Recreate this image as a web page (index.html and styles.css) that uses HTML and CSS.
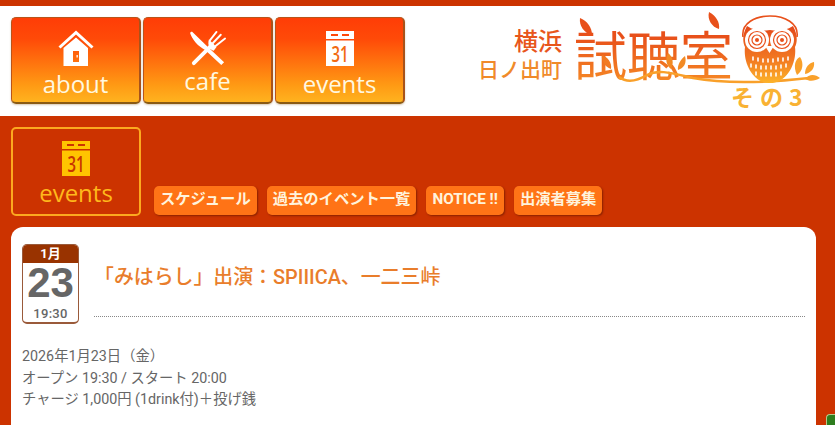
FILE: index.html
```html
<!DOCTYPE html>
<html lang="ja">
<head>
    <meta charset="UTF-8">
    <meta name="viewport" content="width=device-width, initial-scale=1.0">
    <title>横浜日ノ出町 試聴室その3 - events</title>
    <link rel="stylesheet" href="styles.css">
</head>
<body>
    <header class="header">
        <nav class="nav">
            <a class="nav-btn" href="#">
                <svg class="nav-icon" viewBox="0 0 36 36" width="36" height="36">
                    <path d="M18 0.5 L0.5 16.5 L2.5 18.5 L18 4.5 L33.5 18.5 L35.5 16.5 Z" fill="#fff"/>
                    <path fill-rule="evenodd" d="M18 7.5 L30 18 V36 H5.5 V18 Z M15 21 V32 H21 V21 Z" fill="#fff"/>
                    <rect x="18.5" y="25" width="1.3" height="2.5" fill="#fff"/>
                </svg>
                <span class="nav-label">about</span>
            </a>
            <a class="nav-btn" href="#">
                <svg class="nav-icon" viewBox="0 0 40 38" width="40" height="38">
                    <path d="M1 3 L3 1.5 L21 19 L37 34 L34 37 L17 21 C10 18 3 10 1 3 Z" fill="#fff"/>
                    <path d="M5 35 L24 16" stroke="#fff" stroke-width="4" stroke-linecap="round"/>
                    <path d="M29 2 L22 11 M33.5 5 L25 14 M38 9 L28 17" stroke="#fff" stroke-width="2" stroke-linecap="round"/>
                    <path d="M21 10 L29 18 L26 22 C22 21 19 16 21 10 Z" fill="#fff"/>
                </svg>
                <span class="nav-label nav-label-up">cafe</span>
            </a>
            <a class="nav-btn" href="#">
                <svg class="nav-icon" viewBox="0 0 30 36" width="30" height="36">
                    <path fill-rule="evenodd" d="M1 1 H29 V9 H1 Z M6 4 V6 H13 V4 Z M17 4 V6 H24 V4 Z" fill="#fff"/>
                    <path d="M1 10.5 H29 V36 H1 Z" fill="#fff"/>
                    <text x="15" y="32" class="cal-num" textLength="17" lengthAdjust="spacingAndGlyphs" fill="#f26a12">31</text>
                </svg>
                <span class="nav-label">events</span>
            </a>
        </nav>
        <a class="logo" href="#">
            <span class="logo-place">
                <span class="logo-city">横浜</span>
                <span class="logo-town">日ノ出町</span>
            </span>
            <span class="logo-name">試聴室</span>
            <span class="logo-sub">その3</span>
            <svg class="logo-art" viewBox="0 0 260 100" width="260" height="100">
                <defs>
                    <linearGradient id="owlFill" x1="0" y1="0" x2="0" y2="1">
                        <stop offset="0" stop-color="#e4481a"/>
                        <stop offset="0.6" stop-color="#f27a22"/>
                        <stop offset="1" stop-color="#fdb42a"/>
                    </linearGradient>
                </defs>
                <!-- branch -->
                <path d="M44 64 C52 70 62 68 72 62 C84 56 96 60 118 65 C150 71 190 70 234 65" fill="none" stroke="#f9a02a" stroke-width="2.5"/>
                <!-- leaves -->
                <path d="M5 5 C12 8 17 14 17 22 C9 20 4 13 5 5 Z" fill="#e8501a"/>
                <path d="M134 -1 C141 3 145 9 144 16 C137 14 132 7 134 -1 Z" fill="#e8501a"/>
                <path d="M27 42 C33 44 37 50 36 56 C30 54 26 48 27 42 Z" fill="#f27a22"/>
                <path d="M93 40 C98 44 99 50 96 56 C91 52 90 46 93 40 Z" fill="#f28a24"/>
                <path d="M110 43 C106 46 102 52 103 57 C109 55 112 50 110 43 Z" fill="#f28a24"/>
                <path d="M222 62 C218 54 220 46 225 44 C229 50 228 58 222 62 Z" fill="#f9a02a"/>
                <path d="M230 61 C230 54 234 50 239 49 C240 55 236 60 230 61 Z" fill="#f9a02a"/>
                <path d="M230 66 C234 61 240 61 245 65 C240 68 235 69 230 66 Z" fill="#f9a02a"/>
                <!-- headphones -->
                <path d="M168 24 C164 -4 226 -4 222 24" fill="none" stroke="#e8501a" stroke-width="1.6"/>
                <!-- owl -->
                <path d="M172 13 C180 18 186 18 195 17 C204 18 210 18 218 13 C222 20 223 28 220 34 C222 50 212 70 195 70 C178 70 168 50 170 34 C167 28 168 20 172 13 Z" fill="url(#owlFill)"/>
                <circle cx="182" cy="27" r="12" fill="#fff"/>
                <circle cx="207" cy="27" r="12" fill="#fff"/>
                <circle cx="182" cy="27" r="8.5" fill="none" stroke="#e8501a" stroke-width="1.2"/>
                <circle cx="207" cy="27" r="8.5" fill="none" stroke="#e8501a" stroke-width="1.2"/>
                <circle cx="182" cy="27" r="5" fill="none" stroke="#e8501a" stroke-width="1.2"/>
                <circle cx="207" cy="27" r="5" fill="none" stroke="#e8501a" stroke-width="1.2"/>
                <circle cx="182" cy="27" r="2" fill="#e8501a"/>
                <circle cx="207" cy="27" r="2" fill="#e8501a"/>
                <path d="M190 33 H199 L194.5 40 Z" fill="#fff"/>
                <path d="M178 44 v3 M183 45 v3 M188 46 v3 M193 46 v3 M198 46 v3 M203 45 v3 M208 45 v3 M213 44 v3 M176 51 v3 M181 52 v3 M186 53 v3 M191 53 v3 M196 53 v3 M201 53 v3 M206 52 v3 M211 51 v3 M181 59 v3 M186 60 v3 M191 60 v3 M196 60 v3 M201 60 v3 M206 59 v3" stroke="#fff" stroke-width="1.6" stroke-linecap="round"/>
            </svg>
        </a>
    </header>

    <main class="main">
        <div class="section-head">
            <div class="section-badge">
                <svg class="section-icon" viewBox="0 0 30 36" width="30" height="36">
                    <path fill-rule="evenodd" d="M1 1 H29 V9 H1 Z M6 4 V6 H13 V4 Z M17 4 V6 H24 V4 Z" fill="#ffc400"/>
                    <path d="M1 10.5 H29 V36 H1 Z" fill="#ffc400"/>
                    <text x="15" y="32" class="cal-num" textLength="17" lengthAdjust="spacingAndGlyphs" fill="#c93400">31</text>
                </svg>
                <span class="section-label">events</span>
            </div>
            <ul class="tabs">
                <li class="tab">スケジュール</li>
                <li class="tab">過去のイベント一覧</li>
                <li class="tab">NOTICE !!</li>
                <li class="tab">出演者募集</li>
            </ul>
        </div>

        <article class="card">
            <div class="event-head">
                <div class="date">
                    <div class="date-month">1月</div>
                    <div class="date-day">23</div>
                    <div class="date-time">19:30</div>
                </div>
                <h2 class="event-title">「みはらし」出演：SPIIICA、一二三峠</h2>
            </div>
            <div class="event-info">
                <p>2026年1月23日（金）</p>
                <p>オープン 19:30 / スタート 20:00</p>
                <p>チャージ 1,000円 (1drink付)＋投げ銭</p>
            </div>
        </article>
    </main>

    <div class="page-top"></div>
</body>
</html>
```

FILE: styles.css
```css
body {
    margin: 0;
    height: 425px;
    overflow: hidden;
    background-color: #cc3300;
    font-family: Roboto, "Noto Sans CJK JP", sans-serif;
    color: #666;
}
a {
    text-decoration: none;
}

/* header */
.header {
    display: flex;
    justify-content: space-between;
    height: 110px;
    margin-top: 6px;
    background-color: #fff;
    box-sizing: border-box;
    padding: 11px 20px 0 11px;
}
.nav {
    display: flex;
    gap: 2px;
    height: 87px;
}
.nav-btn {
    display: flex;
    flex-direction: column;
    align-items: center;
    width: 130px;
    height: 87px;
    box-sizing: border-box;
    padding-top: 12px;
    border-radius: 5px;
    border: 1px solid #b9541a;
    border-bottom: 2px solid #8a5a14;
    border-right: 2px solid #a8531a;
    background: linear-gradient(#ff3d06 0%, #ff4a08 25%, #ff9a14 80%, #ffb31f 100%);
    box-shadow: 0 1px 2px rgba(120, 70, 0, 0.3);
}
.nav-icon {
    height: 36px;
    overflow: visible;
}
.nav-label {
    margin-top: 2px;
    font-family: "Open Sans", sans-serif;
    font-size: 24px;
    line-height: 32px;
    color: #fff8e0;
}
.nav-label-up {
    margin-top: -1px;
}
.cal-num {
    font-family: "Open Sans", sans-serif;
    font-size: 21px;
    font-weight: 600;
    text-anchor: middle;
}

/* logo */
.logo {
    position: relative;
    display: flex;
    width: 337px;
    height: 99px;
    font-family: "Noto Sans CJK JP", sans-serif;
}
.logo-place {
    display: flex;
    flex-direction: column;
    align-items: flex-end;
    width: 84px;
    margin-top: 9px;
}
.logo-city {
    font-size: 24px;
    font-weight: 500;
    line-height: 28px;
    color: #e8561c;
}
.logo-town {
    font-size: 21px;
    font-weight: 500;
    line-height: 28px;
    white-space: nowrap;
    color: #f08a2a;
}
.logo-name {
    margin: 0 0 0 12px;
    font-size: 53px;
    font-weight: 400;
    line-height: 72px;
    white-space: nowrap;
    background: linear-gradient(#e8501a 20%, #fba02a 85%);
    -webkit-background-clip: text;
    background-clip: text;
    color: transparent;
}
.logo-sub {
    position: absolute;
    left: 253px;
    top: 64px;
    font-size: 23px;
    font-weight: 700;
    letter-spacing: 6px;
    line-height: 30px;
    white-space: nowrap;
    color: #f9b233;
}
.logo-art {
    position: absolute;
    left: 97px;
    top: -4px;
    overflow: visible;
}

/* section head */
.main {
    padding: 11px 19px 0 11px;
}
.section-head {
    display: flex;
    align-items: flex-end;
    height: 89px;
}
.section-badge {
    display: flex;
    flex-direction: column;
    align-items: center;
    width: 130px;
    height: 89px;
    box-sizing: border-box;
    padding-top: 11px;
    border: 2px solid #fca91f;
    border-radius: 5px;
}
.section-icon {
    height: 36px;
    overflow: visible;
}
.section-label {
    margin-top: 1px;
    font-family: "Open Sans", sans-serif;
    font-size: 24px;
    line-height: 32px;
    color: #ffb81c;
}
.tabs {
    display: flex;
    gap: 10px;
    margin: 0 0 1px 13px;
    padding: 0;
    list-style: none;
}
.tab {
    height: 29px;
    padding: 0 6px;
    border-radius: 5px;
    background-color: #ff7316;
    box-shadow: 1px 1px 2px rgba(90, 20, 0, 0.6);
    font-size: 15.3px;
    font-weight: 700;
    line-height: 27px;
    white-space: nowrap;
    color: #fff3dc;
}

/* event card */
.card {
    width: 805px;
    height: 198px;
    margin-top: 11px;
    box-sizing: border-box;
    padding: 17px 11px 0;
    border-radius: 12px 12px 0 0;
    background-color: #fff;
}
.event-head {
    display: flex;
    height: 73px;
}
.date {
    width: 57px;
    height: 80px;
    flex: none;
    box-sizing: border-box;
    border: 1px solid #9a5a3a;
    border-bottom-width: 2px;
    border-radius: 5px;
    overflow: hidden;
    text-align: center;
    background-color: #fff;
}
.date-month {
    height: 18px;
    background-color: #993300;
    font-size: 13px;
    font-weight: 700;
    line-height: 18px;
    color: #fff;
}
.date-day {
    height: 40px;
    font-family: "Liberation Sans", sans-serif;
    font-size: 42px;
    font-weight: 700;
    line-height: 40px;
    color: #666;
}
.date-time {
    font-size: 13px;
    font-weight: 500;
    letter-spacing: 0.3px;
    line-height: 21px;
    color: #666;
}
.event-title {
    flex: 1;
    height: 73px;
    box-sizing: border-box;
    margin: 0 0 0 15px;
    padding: 20px 0 0;
    border-bottom: 1px dotted #888;
    font-size: 19.9px;
    font-weight: 500;
    line-height: 28px;
    color: #e97d2b;
}
.event-info {
    margin-top: 29px;
    font-size: 14.3px;
    line-height: 21.5px;
}
.event-info p {
    margin: 0;
}

/* page top button peeking in at the corner */
.page-top {
    position: fixed;
    right: 0;
    bottom: 0;
    width: 8px;
    height: 10px;
    border: 1px solid #b5c98a;
    border-right: none;
    border-bottom: none;
    border-radius: 4px 0 0 0;
    background-color: #2e7d1e;
}
```
